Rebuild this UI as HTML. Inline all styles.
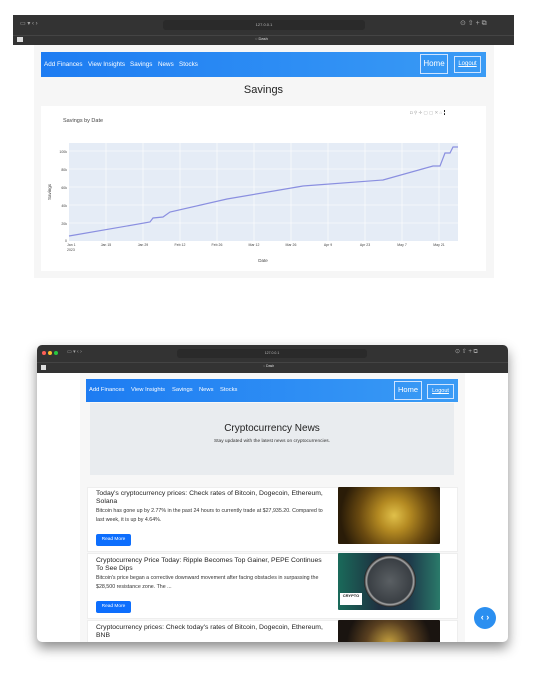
<!DOCTYPE html>
<html><head><style>
*{margin:0;padding:0;box-sizing:border-box}
body{width:554px;height:679px;background:#fff;position:relative;overflow:hidden;font-family:"Liberation Sans",sans-serif}
.a{position:absolute}
.bar{background:#333}
.nav{background:linear-gradient(90deg,#1d7cf2,#3a9bf5);color:#fff}
.nav span{position:absolute;font-size:6.3px}
.t{color:#222;font-size:6.8px;line-height:8px}
.p{color:#333;font-size:5.3px;line-height:9px}
.btn{background:#0d6efd;color:#fff;font-size:4.8px;border-radius:2px;text-align:center;line-height:12px;width:35px;height:12px}
.img{border-radius:1px}
</style></head><body>
<!-- top screenshot -->
<div class="a bar" style="left:13px;top:15px;width:501px;height:30px"></div>
<div class="a" style="left:13px;top:35px;width:501px;height:1px;background:#444"></div>
<div class="a" style="left:163px;top:20px;width:202px;height:10px;background:#2a2a2a;border-radius:3px;color:#bbb;font-size:4px;text-align:center;line-height:10px">127.0.0.1</div>
<div class="a" style="left:20px;top:20px;color:#aaa;font-size:6px">▭ ▾ ‹ ›</div>
<div class="a" style="left:460px;top:19px;color:#aaa;font-size:7px">⊙ ⇧ + ⧉</div>
<div class="a" style="left:17px;top:37px;width:6px;height:5px;background:#ddd"></div>
<div class="a" style="left:255px;top:36px;color:#ddd;font-size:4px">◌ Dash</div>
<div class="a" style="left:34px;top:45px;width:460px;height:233px;background:#f6f6f6"></div>
<div class="a nav" style="left:41px;top:52px;width:445px;height:25px">
<span style="left:3px;top:9px">Add Finances</span><span style="left:47px;top:9px">View Insights</span><span style="left:89px;top:9px">Savings</span><span style="left:117px;top:9px">News</span><span style="left:138px;top:9px">Stocks</span>
<span style="left:379px;top:2px;width:28px;height:20px;border:1px solid #cfe4ff;font-size:8px;text-align:center;line-height:17px">Home</span>
<span style="left:413px;top:4px;width:27px;height:17px;border:1px solid #cfe4ff;font-size:6px;text-align:center;line-height:15px;text-decoration:underline">Logout</span>
</div>
<div class="a" style="left:41px;top:84px;width:445px;text-align:center;font-size:11px;color:#222">Savings</div>
<div class="a" style="left:41px;top:106px;width:445px;height:165px;background:#fff"></div>
<div class="a" style="left:63px;top:118px;font-size:5.5px;color:#444">Savings by Date</div>
<div class="a" style="left:410px;top:110px;font-size:4.5px;color:#aaa">◘ ⚲ ✛ ▢ ▢ ✕ ⌂ <span style="background:#222;color:#fff">▪</span></div>
<svg class="a" style="left:41px;top:106px" width="445" height="165">
<rect x="28" y="37" width="389" height="98" fill="#e5ecf6"/>
<g stroke="#fff" stroke-width="0.6">
<line x1="28" y1="45" x2="417" y2="45"/><line x1="28" y1="63" x2="417" y2="63"/><line x1="28" y1="81" x2="417" y2="81"/><line x1="28" y1="99" x2="417" y2="99"/><line x1="28" y1="117" x2="417" y2="117"/>
<line x1="65" y1="37" x2="65" y2="135"/><line x1="102" y1="37" x2="102" y2="135"/><line x1="139" y1="37" x2="139" y2="135"/><line x1="176" y1="37" x2="176" y2="135"/><line x1="213" y1="37" x2="213" y2="135"/><line x1="250" y1="37" x2="250" y2="135"/><line x1="287" y1="37" x2="287" y2="135"/><line x1="324" y1="37" x2="324" y2="135"/><line x1="361" y1="37" x2="361" y2="135"/><line x1="398" y1="37" x2="398" y2="135"/>
</g>
<polyline fill="none" stroke="#8a8fe0" stroke-width="1.2" points="28,130 109,116 112,112 122,111 129,106 186,93 262,80 342,74 392,60 399,60 404,47 409,47 412,41 417,41"/>
<g font-size="3.5" fill="#444" font-family="Liberation Sans">
<text x="26" y="47" text-anchor="end">100k</text><text x="26" y="65" text-anchor="end">80k</text><text x="26" y="83" text-anchor="end">60k</text><text x="26" y="101" text-anchor="end">40k</text><text x="26" y="119" text-anchor="end">20k</text><text x="26" y="136" text-anchor="end">0</text>
<text x="26" y="140">Jan 1</text><text x="26" y="145">2023</text>
<text x="65" y="140" text-anchor="middle">Jan 15</text><text x="102" y="140" text-anchor="middle">Jan 29</text><text x="139" y="140" text-anchor="middle">Feb 12</text><text x="176" y="140" text-anchor="middle">Feb 26</text><text x="213" y="140" text-anchor="middle">Mar 12</text><text x="250" y="140" text-anchor="middle">Mar 26</text><text x="287" y="140" text-anchor="middle">Apr 9</text><text x="324" y="140" text-anchor="middle">Apr 23</text><text x="361" y="140" text-anchor="middle">May 7</text><text x="398" y="140" text-anchor="middle">May 21</text>
<text x="222" y="156" text-anchor="middle" font-size="4.5">Date</text>
<text x="10" y="86" font-size="4.5" transform="rotate(-90 10 86)" text-anchor="middle">Savings</text>
</g></svg>

<!-- bottom screenshot -->
<div class="a" style="left:37px;top:345px;width:471px;height:297px;background:#fff;border-radius:5px;box-shadow:0 6px 12px rgba(0,0,0,.45);overflow:hidden">
<div class="a bar" style="left:0;top:0;width:471px;height:28px"></div>
<div class="a" style="left:0;top:17px;width:471px;height:1px;background:#444"></div>
<div class="a" style="left:5px;top:6px;width:4px;height:4px;border-radius:50%;background:#ff5f57"></div>
<div class="a" style="left:11px;top:6px;width:4px;height:4px;border-radius:50%;background:#febc2e"></div>
<div class="a" style="left:17px;top:6px;width:4px;height:4px;border-radius:50%;background:#28c840"></div>
<div class="a" style="left:30px;top:4px;color:#aaa;font-size:5px">▭ ▾ ‹ ›</div>
<div class="a" style="left:140px;top:4px;width:190px;height:9px;background:#2a2a2a;border-radius:3px;color:#bbb;font-size:3.5px;text-align:center;line-height:9px">127.0.0.1</div>
<div class="a" style="left:418px;top:3px;color:#aaa;font-size:6px">⊙ ⇧ + ⧉</div>
<div class="a" style="left:4px;top:20px;width:5px;height:5px;background:#ddd"></div>
<div class="a" style="left:226px;top:19px;color:#ddd;font-size:3.5px">◌ Dash</div>
<div class="a" style="left:43px;top:28px;width:385px;height:269px;background:#f7f7f7"></div>
<div class="a nav" style="left:49px;top:34px;width:372px;height:23px">
<span style="left:3px;top:8px;font-size:5.8px">Add Finances</span><span style="left:45px;top:8px;font-size:5.8px">View Insights</span><span style="left:86px;top:8px;font-size:5.8px">Savings</span><span style="left:113px;top:8px;font-size:5.8px">News</span><span style="left:134px;top:8px;font-size:5.8px">Stocks</span>
<span style="left:308px;top:2px;width:28px;height:19px;border:1px solid #cfe4ff;font-size:7.5px;text-align:center;line-height:16px">Home</span>
<span style="left:341px;top:5px;width:27px;height:15px;border:1px solid #cfe4ff;font-size:5.5px;text-align:center;line-height:13px;text-decoration:underline">Logout</span>
</div>
<div class="a" style="left:53px;top:58px;width:364px;height:72px;background:#e9ecef">
<div class="a" style="left:0;top:20px;width:364px;text-align:center;font-size:10px;color:#222">Cryptocurrency News</div>
<div class="a" style="left:0;top:36px;width:364px;text-align:center;font-size:4.8px;color:#333">Stay updated with the latest news on cryptocurrencies.</div>
</div>
<!-- card1 -->
<div class="a" style="left:50px;top:142px;width:371px;height:65px;background:#fff;border:1px solid #eee"></div>
<div class="a t" style="left:59px;top:145px;width:228px">Today's cryptocurrency prices: Check rates of Bitcoin, Dogecoin, Ethereum, Solana</div>
<div class="a p" style="left:59px;top:162px;width:228px">Bitcoin has gone up by 2.77% in the past 24 hours to currently trade at $27,935.20. Compared to last week, it is up by 4.64%.</div>
<div class="a btn" style="left:59px;top:189px">Read More</div>
<div class="a img" style="left:301px;top:142px;width:102px;height:57px;background:radial-gradient(circle at 55% 50%,#e0c04a 0,#b48a22 25%,#6a4a10 55%,#2a1c08 85%)"></div>
<!-- card2 -->
<div class="a" style="left:50px;top:208px;width:371px;height:66px;background:#fff;border:1px solid #eee"></div>
<div class="a t" style="left:59px;top:212px;width:228px">Cryptocurrency Price Today: Ripple Becomes Top Gainer, PEPE Continues To See Dips</div>
<div class="a p" style="left:59px;top:229px;width:228px">Bitcoin's price began a corrective downward movement after facing obstacles in surpassing the $28,500 resistance zone. The ...</div>
<div class="a btn" style="left:59px;top:256px">Read More</div>
<div class="a img" style="left:301px;top:208px;width:102px;height:57px;background:linear-gradient(90deg,#1a6a5a,#1e3040 40%,#1e3a4a 70%,#2a7a6a)">
<div class="a" style="left:26px;top:2px;width:52px;height:52px;border-radius:50%;background:radial-gradient(circle,#5a5f63 0,#3a3f44 60%,#aaa 64%,#222 70%)"></div>
<div class="a" style="left:2px;top:40px;width:22px;height:12px;background:#fff;color:#222;font-size:4px;font-weight:bold;text-align:center">CRYPTO</div>
</div>
<!-- card3 -->
<div class="a" style="left:50px;top:275px;width:371px;height:30px;background:#fff;border:1px solid #eee"></div>
<div class="a t" style="left:59px;top:279px;width:228px">Cryptocurrency prices: Check today's rates of Bitcoin, Dogecoin, Ethereum, BNB</div>
<div class="a img" style="left:301px;top:275px;width:102px;height:30px;background:radial-gradient(circle at 50% 80%,#c9a440 0,#5a4020 40%,#1a1410 75%)"></div>
<div class="a" style="left:437px;top:262px;width:22px;height:22px;border-radius:50%;background:#2b8ff0;color:#fff;font-size:9px;text-align:center;line-height:21px;font-weight:bold">‹ ›</div>
</div>
</body></html>
